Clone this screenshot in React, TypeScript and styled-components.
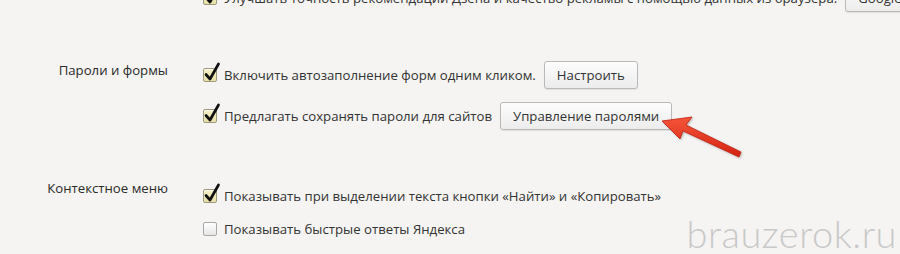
import React from "react"
import styled, { createGlobalStyle } from "styled-components"

const GlobalStyle = createGlobalStyle`
  html, body {
    margin: 0;
    padding: 0;
    background: #f5f4f2;
    overflow: hidden;
  }
  body {
    font-family: "Open Sans", "Noto Sans", "Liberation Sans", sans-serif;
    color: #2f2f2f;
  }
`

const Page = styled.div`
  position: relative;
  width: 900px;
  height: 254px;
  overflow: hidden;
`

const Sections = styled.div`
  display: flex;
  flex-direction: column;
  gap: 49px;
  margin-top: -16px;
`

const Section = styled.section`
  display: grid;
  grid-template-columns: 168px 1fr;
  column-gap: 35px;
  align-items: start;
`

const SectionLabel = styled.div`
  text-align: right;
  font-size: 13.2px;
  line-height: 18px;
  color: #2a2a2a;
`

const OptionList = styled.div<{ $pad?: number }>`
  display: flex;
  flex-direction: column;
  gap: 13px;
  padding-top: ${(p) => p.$pad ?? 0}px;
`

const Row = styled.label<{ $tall?: boolean }>`
  display: flex;
  align-items: center;
  min-height: ${(p) => (p.$tall ? 28 : 20)}px;
  font-size: 13.2px;
  color: #333;
  white-space: nowrap;
`

const BoxWrap = styled.span`
  position: relative;
  width: 14px;
  height: 14px;
  flex: none;
  margin-right: 7px;
`

const Box = styled.span<{ $checked?: boolean }>`
  position: absolute;
  inset: 0;
  box-sizing: border-box;
  border: 1px solid ${(p) => (p.$checked ? "#9d9a7c" : "#a9a9a9")};
  border-radius: 2px;
  background: ${(p) =>
    p.$checked
      ? "linear-gradient(#f3eec6, #e8e0a6)"
      : "linear-gradient(#ffffff, #e6e6e6)"};
  box-shadow: inset 0 1px 1px rgba(255, 255, 255, 0.8);
`

const Tick = styled.svg`
  position: absolute;
  left: 1px;
  top: -5px;
  overflow: visible;
`

const Button = styled.button`
  margin-left: 8px;
  height: 28px;
  padding: 0 12px;
  box-sizing: border-box;
  border: 1px solid #b9b9b9;
  border-radius: 3px;
  background: linear-gradient(#fdfdfd, #ececec);
  box-shadow: 0 1px 1px rgba(0, 0, 0, 0.08);
  font-family: inherit;
  font-size: 13.2px;
  color: #333;
`

const Arrow = styled.svg`
  position: absolute;
  left: 655px;
  top: 112px;
  filter: drop-shadow(1px 1px 1px rgba(0, 0, 0, 0.25));
`

const Watermark = styled.div`
  position: absolute;
  right: 3px;
  bottom: -2px;
  font-family: "Lato", "Open Sans", sans-serif;
  font-weight: 300;
  font-size: 38px;
  letter-spacing: 0.5px;
  color: #c9c9c9;
`

function Checkbox({ checked }: { checked?: boolean }) {
  return (
    <BoxWrap>
      <Box $checked={checked} />
      {checked && (
        <Tick width="16" height="18" viewBox="0 0 16 18">
          <path
            d="M2 11.5 L6 16 L14.5 1"
            fill="none"
            stroke="#111"
            strokeWidth="2.7"
            strokeLinecap="round"
            strokeLinejoin="round"
          />
        </Tick>
      )}
    </BoxWrap>
  )
}

type OptionProps = { text?: string; checked?: boolean; button?: string }

function Option({ text, checked, button }: OptionProps) {
  return (
    <Row $tall={!!button}>
      <Checkbox checked={checked} />
      {text}
      {button && <Button>{button}</Button>}
    </Row>
  )
}

export default function App() {
  return (
    <>
      <GlobalStyle />
      <Page>
        <Sections>
          <Section>
            <SectionLabel />
            <OptionList>
              <Option
                checked
                text="Улучшать точность рекомендаций Дзена и качество рекламы с помощью данных из браузера."
                button="Google Chrome"
              />
            </OptionList>
          </Section>

          <Section>
            <SectionLabel>Пароли и формы</SectionLabel>
            <OptionList>
              <Option checked text="Включить автозаполнение форм одним кликом." button="Настроить" />
              <Option checked text="Предлагать сохранять пароли для сайтов" button="Управление паролями" />
            </OptionList>
          </Section>

          <Section>
            <SectionLabel>Контекстное меню</SectionLabel>
            <OptionList $pad={7}>
              <Option checked text="Показывать при выделении текста кнопки «Найти» и «Копировать»" />
              <Option text="Показывать быстрые ответы Яндекса" />
              <Option />
            </OptionList>
          </Section>
        </Sections>

        <Arrow width="92" height="50" viewBox="0 0 92 50">
          <defs>
            <linearGradient id="arrowFill" x1="0" y1="0" x2="0" y2="1">
              <stop offset="0" stopColor="#f5553a" />
              <stop offset="1" stopColor="#d42312" />
            </linearGradient>
          </defs>
          <path
            d="M7 9 L37 5 L31 13 L86 40 L84 45 L28 19 L25 27 Z"
            fill="url(#arrowFill)"
            stroke="#c01d0e"
            strokeWidth="0.8"
            strokeLinejoin="round"
          />
        </Arrow>

        <Watermark>brauzerok.ru</Watermark>
      </Page>
    </>
  )
}
